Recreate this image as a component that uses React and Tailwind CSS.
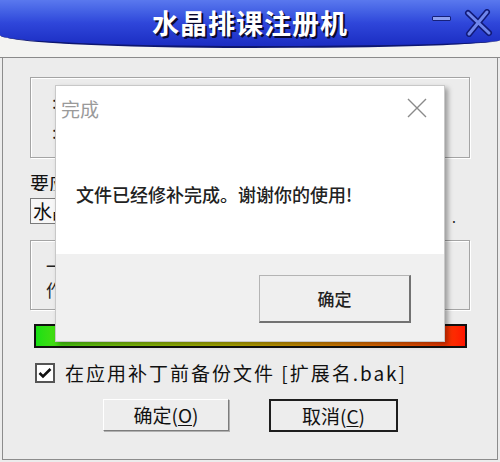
import React from "react";

const cjk = "font-['Noto_Sans_CJK_SC','Noto_Sans',sans-serif]";

function TitleBar() {
  return (
    <div className="relative h-[58px] bg-[#f3f3f1] border-b border-[#8a8a8a]">
      <div className="h-[48px] bg-gradient-to-b from-[#5a78ee] via-[#2f46da] to-[#1b2cc2] border-b-2 border-[#0d1670] rounded-bl-[250px_13px] rounded-br-[250px_8px] flex items-center justify-center">
        <h1 className="text-white text-[27px] font-bold tracking-[1px] leading-none mt-[-2px] [text-shadow:2px_2px_0_#0a0a30]">
          水晶排课注册机
        </h1>
      </div>
      {/* window controls over the title bar */}
      <div className="absolute top-[16px] left-[432px] w-[19px] h-[5px] bg-[#8ea0f0] border border-[#16207a] rounded-[1px]" />
      <svg className="absolute top-[9px] left-[463px]" width="30" height="28" viewBox="0 0 30 28">
        <path d="M5 4 L26 24 M24 3 L6 25" stroke="#111a78" strokeWidth="6" strokeLinecap="round" />
        <path d="M5 4 L26 24 M24 3 L6 25" stroke="#6f86ec" strokeWidth="3" strokeLinecap="round" />
      </svg>
    </div>
  );
}

function MainWindow() {
  return (
    <div className="mx-[2px] h-[402px] border-x border-b border-[#8c8c8c] px-[27px] pt-[19px] flex flex-col">
      {/* group box 1, mostly hidden under the dialog */}
      <div className="h-[81px] border border-[#a4a4a4] shadow-[inset_1px_1px_0_#ffffff,1px_1px_0_#ffffff] pl-[21px] pt-[14px] flex flex-col gap-[10px] text-[17px] leading-[20px] text-[#222]">
        <p className="w-[3px] overflow-hidden">:</p>
        <p className="w-[3px] overflow-hidden">:</p>
      </div>

      <div className="mt-[17px] w-[25px] overflow-hidden whitespace-nowrap text-[19px] leading-[16px] h-[16px] text-[#111]">要应</div>
      <div className="mt-[7px] flex items-end gap-[12px]">
        <div className="w-[410px] h-[26px] border border-[#7a7a7a] bg-[#f7f7f7] pl-[2px] text-[19px] leading-[24px] text-[#111]">
          <div className="w-[22px] overflow-hidden whitespace-nowrap">水晶</div>
        </div>
        <span className="text-[14px] leading-[14px] text-[#222]">.</span>
      </div>

      {/* group box 2 */}
      <div className="mt-[16px] h-[70px] border border-[#a4a4a4] shadow-[inset_1px_1px_0_#ffffff,1px_1px_0_#ffffff] pl-[15px] pt-[14px] flex flex-col gap-[2px] text-[17px] leading-[22px] text-[#222]">
        <p className="w-[9px] h-[22px] overflow-hidden whitespace-nowrap">一</p>
        <p className="w-[9px] h-[22px] overflow-hidden whitespace-nowrap">作</p>
      </div>

      {/* progress bar */}
      <div className="mt-[14px] ml-[4px] mr-[3px] h-[24px] border-2 border-[#111] bg-gradient-to-r from-[#14e014] via-[#b8b400] via-45% to-[#ff1400]" />

      {/* checkbox row */}
      <div className="mt-[13px] ml-[5px] h-[24px] flex items-center gap-[10px]">
        <div className="w-[20px] h-[20px] border-2 border-[#555] bg-white flex items-center justify-center">
          <svg width="14" height="12" viewBox="0 0 14 12">
            <path d="M1.5 6 L5 9.5 L12.5 2" stroke="#111" strokeWidth="2.6" fill="none" />
          </svg>
        </div>
        <span className="text-[19px] leading-[24px] tracking-[2px] text-[#111]">
          在应用补丁前备份文件 [扩展名.bak]
        </span>
      </div>

      {/* buttons */}
      <div className="mt-[14px] ml-[73px] flex gap-[40px]">
        <button className="w-[126px] h-[32px] bg-[#ededed] border border-t-white border-l-white border-b-[#7c7c7c] border-r-[#7c7c7c] shadow-[1px_1px_0_#b0b0b0] text-[19px] leading-[28px] text-[#111]">
          确定(<span className="underline underline-offset-2">O</span>)
        </button>
        <button className="w-[129px] h-[33px] bg-[#ededed] border-2 border-[#1e1e1e] text-[19px] leading-[28px] text-[#111]">
          取消(<span className="underline underline-offset-2">C</span>)
        </button>
      </div>
    </div>
  );
}

function DoneDialog() {
  return (
    <div className="absolute left-[55px] top-[85px] w-[390px] h-[257px] border border-[#c8c8c8] shadow-[3px_3px_5px_rgba(0,0,0,0.35)] flex flex-col">
      <div className="h-[168px] bg-white">
        <div className="flex items-start justify-between pl-[5px] pr-[17px] pt-[12px]">
          <span className="text-[19px] leading-[22px] text-[#9a9a9a]">完成</span>
          <svg width="20" height="20" viewBox="0 0 20 20">
            <path d="M1 1 L19 19 M19 1 L1 19" stroke="#8a8a8a" strokeWidth="1.4" />
          </svg>
        </div>
        <p className="mt-[62px] pl-[20px] text-[18px] leading-[24px] font-medium text-[#222]">
          文件已经修补完成。谢谢你的使用!
        </p>
      </div>
      <div className="flex-1 bg-[#f0f0f0] flex justify-end pr-[33px] pt-[21px]">
        <button className="w-[152px] h-[48px] bg-[#efefef] border border-[#b4b4b4] border-b-2 border-r-2 border-b-[#727272] border-r-[#727272] text-[17px] font-medium text-[#222]">
          确定
        </button>
      </div>
    </div>
  );
}

export default function App() {
  return (
    <div className={`relative w-[500px] h-[462px] overflow-hidden bg-[#ececec] ${cjk}`}>
      <TitleBar />
      <MainWindow />
      <DoneDialog />
    </div>
  );
}
